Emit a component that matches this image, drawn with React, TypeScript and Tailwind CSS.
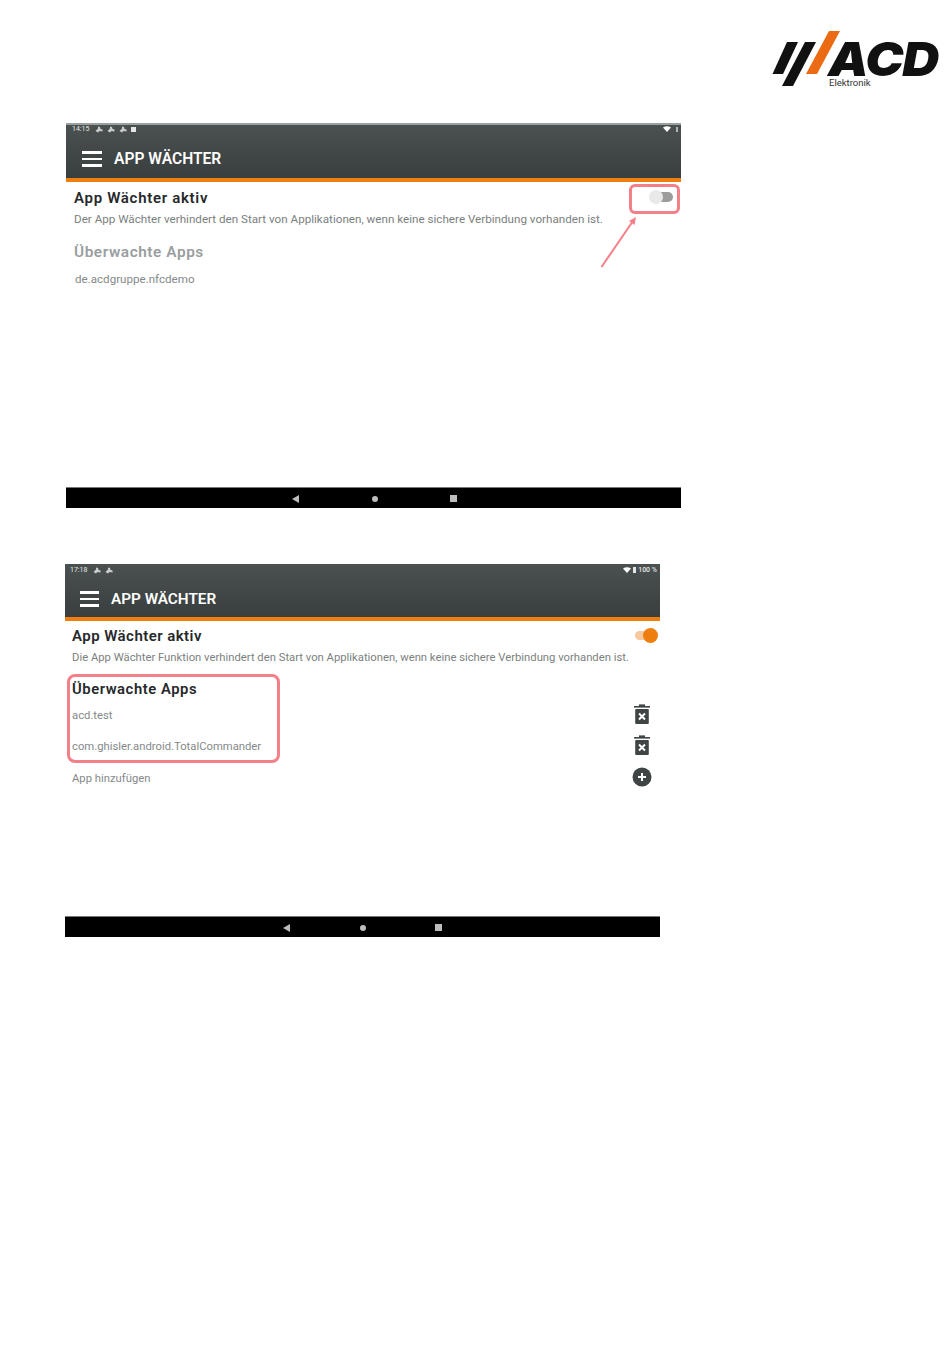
import React from 'react';

const AcdLogo = () => (
  <div className="relative w-[168px] h-[58px]">
    <svg width="70" height="58" viewBox="0 0 70 58" className="absolute left-0 top-0">
      <polygon points="2.5,44 17,12 28,12 13,44" fill="#111" />
      <polygon points="12,56 35,12 46,12 23,56" fill="#111" />
      <polygon points="36,44 59,1 70,1 47,44" fill="#ea6b14" />
    </svg>
    <span className="absolute left-[58px] top-[14px] text-[47px] leading-[30px] font-black italic text-[#111] font-['Inter',sans-serif] tracking-[-1px] origin-left scale-x-[1.09]">
      ACD
    </span>
    <span className="absolute left-[59px] top-[48px] text-[9.5px] leading-[10px] text-[#333]">Elektronik</span>
  </div>
);

const Wrench = () => (
  <svg width="8" height="7" viewBox="0 0 8 7">
    <path d="M0.5 5 L3 2.5 L3 0.5 L5 1 L5.5 3 L7.5 3.5 L7.5 5.5 L4.5 5 L3 6.5 Z" fill="#c9cdcd" />
  </svg>
);

const Wifi = () => (
  <svg width="8" height="6" viewBox="0 0 8 6">
    <path d="M0 1.5 Q4 -1 8 1.5 L4 6 Z" fill="#fff" />
  </svg>
);

const Hamburger = ({ w }: { w: number }) => (
  <div className="flex flex-col gap-[4px]" style={{ width: w }}>
    <div className="h-[2.5px] bg-white" />
    <div className="h-[2.5px] bg-white" />
    <div className="h-[2.5px] bg-white" />
  </div>
);

const NavBar = ({ gap, pad }: { gap: string; pad: string }) => (
  <div className={`h-[21px] pt-[1px] bg-black border-t border-[#777] flex items-center ${gap} ${pad}`}>
    <svg width="8" height="8" viewBox="0 0 8 8">
      <polygon points="0,4 7,0 7,8" fill="#bdbdbd" />
    </svg>
    <div className="w-[6px] h-[6px] rounded-full bg-[#bdbdbd]" />
    <div className="w-[7px] h-[7px] bg-[#bdbdbd]" />
  </div>
);

const TrashX = () => (
  <svg width="18" height="21" viewBox="0 0 18 21" className="-translate-y-[1px]">
    <rect x="1" y="2" width="16" height="1.6" fill="#3f4444" />
    <rect x="6" y="0.4" width="6" height="1.6" fill="#3f4444" />
    <rect x="2.2" y="5" width="13.6" height="15" rx="1" fill="#3f4444" />
    <path d="M6 9.5 L12 15.5 M12 9.5 L6 15.5" stroke="#fff" strokeWidth="2" />
  </svg>
);

const PlusCircle = () => (
  <svg width="20" height="20" viewBox="0 0 20 20" className="-translate-y-[1px] translate-x-[1px]">
    <circle cx="10" cy="10" r="9.5" fill="#3f4444" />
    <path d="M10 6 V14 M6 10 H14" stroke="#fff" strokeWidth="2" />
  </svg>
);

const headerBg = 'bg-gradient-to-b from-[#4b5151] to-[#393e3e]';

export default function App() {
  return (
    <div className="w-[950px] h-[1369px] bg-white overflow-hidden font-['Roboto',sans-serif]">
      <div className="flex justify-end pt-[30px] pr-[12px]">
        <AcdLogo />
      </div>

      {/* first screenshot, toggle off */}
      <div className="relative ml-[66px] mt-[35px] w-[615px] h-[385px] flex flex-col">
        <div className={`${headerBg} border-t-2 border-[#9aa0a0] border-b-4 border-b-[#ee7f0e] h-[59px]`}>
          <div className="h-[8px] pl-[6px] pr-[3px] flex items-center gap-[4px] text-[7px] text-[#e5e7e7]">
            <span className="mr-[2px]">14:15</span>
            <Wrench />
            <Wrench />
            <Wrench />
            <div className="w-[5px] h-[5px] bg-[#e5e7e7]" />
            <div className="ml-auto flex items-center gap-[5px]">
              <Wifi />
              <div className="w-[2px] h-[5px] bg-[#aeb2b2]" />
            </div>
          </div>
          <div className="flex items-center pl-[16px] pt-[15px]">
            <Hamburger w={20} />
            <span className="ml-[12px] text-[15.6px] leading-[22px] font-semibold text-white">APP WÄCHTER</span>
          </div>
        </div>
        <div className="flex-1 px-[8px] pt-[6px] relative">
          <div className="flex items-center justify-between">
            <div className="text-[15px] leading-[20px] font-semibold tracking-[0.7px] text-[#26292b]">App Wächter aktiv</div>
            <div className="relative w-[24px] h-[14px] -translate-y-[1px]">
              <div className="absolute right-0 top-[2px] w-[22px] h-[10px] rounded-full bg-[#9c9c9c]" />
              <div className="absolute left-0 top-0 w-[14px] h-[14px] rounded-full bg-[#e9e9e9]" />
            </div>
          </div>
          <div className="mt-[2px] text-[11.65px] leading-[18px] text-[#7b7f80]">
            Der App Wächter verhindert den Start von Applikationen, wenn keine sichere Verbindung vorhanden ist.
          </div>
          <div className="mt-[13px] text-[15.4px] leading-[22px] font-semibold tracking-[0.55px] text-[#9a9ea0]">Überwachte Apps</div>
          <div className="mt-[7px] ml-[1px] text-[11.6px] leading-[18px] text-[#85898a]">de.acdgruppe.nfcdemo</div>
        </div>
        <NavBar gap="gap-[72px]" pad="pl-[226px]" />

        <div className="absolute left-[563px] top-[61px] w-[51px] h-[30px] border-[3px] border-[#f47f88] rounded-[6px]" />
        <svg width="50" height="60" viewBox="0 0 50 60" className="absolute left-[530px] top-[90px]">
          <path d="M5.5 54 L37 8" stroke="#f47f88" strokeWidth="2" />
          <polygon points="40,4 38.5,12 33,8" fill="#f47f88" />
        </svg>
      </div>

      {/* second screenshot, toggle on */}
      <div className="relative ml-[65px] mt-[56px] w-[595px] h-[373px] flex flex-col">
        <div className={`${headerBg} border-b-4 border-b-[#ee7f0e] h-[57px]`}>
          <div className="h-[10px] mt-[1px] pl-[5px] pr-[3px] flex items-center gap-[4px] text-[7px] text-[#e5e7e7]">
            <span className="mr-[2px]">17:18</span>
            <Wrench />
            <Wrench />
            <div className="ml-auto flex items-center gap-[2px]">
              <Wifi />
              <div className="w-[3px] h-[6px] bg-[#e5e7e7]" />
              <span className="font-medium">100 %</span>
            </div>
          </div>
          <div className="flex items-center pl-[15px] pt-[13px]">
            <Hamburger w={19} />
            <span className="ml-[12px] text-[15.3px] leading-[22px] font-semibold text-white">APP WÄCHTER</span>
          </div>
        </div>
        <div className="flex-1 pl-[7px] pr-[2px] pt-[5px] relative">
          <div className="flex items-center justify-between">
            <div className="text-[15px] leading-[20px] font-semibold tracking-[0.45px] text-[#26292b]">App Wächter aktiv</div>
            <div className="relative w-[23px] h-[15px] -translate-y-[1px]">
              <div className="absolute left-0 top-[3px] w-[20px] h-[9px] rounded-full bg-[#f7c89c]" />
              <div className="absolute right-0 top-0 w-[15px] h-[15px] rounded-full bg-[#ee7f0e]" />
            </div>
          </div>
          <div className="mt-[3px] text-[11.27px] leading-[18px] text-[#7b7f80] whitespace-nowrap">
            Die App Wächter Funktion verhindert den Start von Applikationen, wenn keine sichere Verbindung vorhanden ist.
          </div>
          <div className="mt-[11px] text-[14.8px] leading-[22px] font-semibold tracking-[0.55px] text-[#26292b]">Überwachte Apps</div>
          <div className="mt-[5px] flex flex-col gap-[10px] text-[11.27px] leading-[21px] text-[#85898a] pr-[7px]">
            <div className="flex items-center justify-between h-[21px]">
              <span>acd.test</span>
              <TrashX />
            </div>
            <div className="flex items-center justify-between h-[21px]">
              <span>com.ghisler.android.TotalCommander</span>
              <TrashX />
            </div>
            <div className="flex items-center justify-between h-[21px]">
              <span className="translate-y-[1px]">App hinzufügen</span>
              <PlusCircle />
            </div>
          </div>
        </div>
        <NavBar gap="gap-[69px]" pad="pl-[218px]" />

        <div className="absolute left-[2px] top-[110px] w-[213px] h-[89px] border-[3px] border-[#f47f88] rounded-[8px]" />
      </div>
    </div>
  );
}
